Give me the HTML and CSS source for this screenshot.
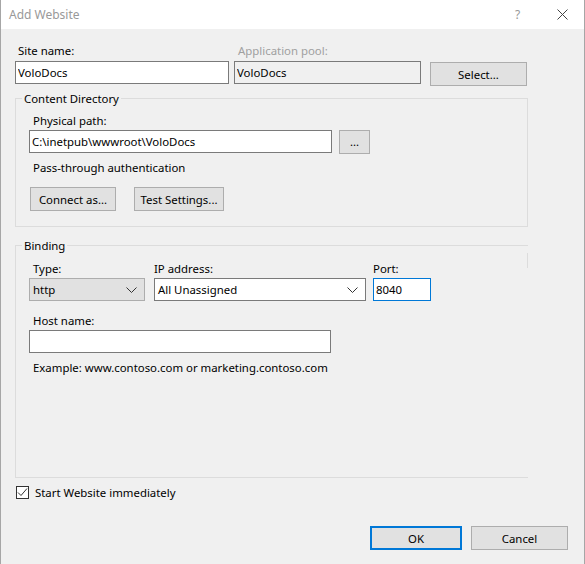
FILE: index.html
```html
<!DOCTYPE html>
<html lang="en">
<head>
    <meta charset="UTF-8">
    <meta name="viewport" content="width=device-width, initial-scale=1.0">
    <title>Add Website</title>
    <link rel="stylesheet" href="styles.css">
</head>
<body>

<div class="window">
    <!-- Title bar -->
    <div class="titlebar">
        <span class="title">Add Website</span>
        <span class="help">?</span>
        <span class="close">
            <svg width="11" height="11" viewBox="0 0 11 11">
                <path d="M0.5 0.5 L10.5 10.5 M10.5 0.5 L0.5 10.5" stroke="#444" stroke-width="1" fill="none"/>
            </svg>
        </span>
    </div>

    <div class="content">
        <!-- Site name / app pool -->
        <div class="top-row">
            <div class="field site-field">
                <label class="label">Site name:</label>
                <input class="textbox" type="text" value="VoloDocs">
            </div>
            <div class="field pool-field">
                <label class="label disabled">Application pool:</label>
                <input class="textbox readonly" type="text" value="VoloDocs" readonly>
            </div>
            <button class="btn select-btn">Select...</button>
        </div>

        <!-- Content Directory -->
        <fieldset class="group content-dir">
            <legend>Content Directory</legend>
            <div class="group-body">
                <label class="label">Physical path:</label>
                <div class="path-row">
                    <input class="textbox path-box" type="text" value="C:\inetpub\wwwroot\VoloDocs">
                    <button class="btn browse-btn">...</button>
                </div>
                <div class="note">Pass-through authentication</div>
                <div class="btn-row">
                    <button class="btn connect-btn">Connect as...</button>
                    <button class="btn test-btn">Test Settings...</button>
                </div>
            </div>
        </fieldset>

        <!-- Binding -->
        <fieldset class="group binding">
            <legend>Binding</legend>
            <div class="group-body">
                <div class="binding-row">
                    <div class="field type-field">
                        <label class="label">Type:</label>
                        <div class="combo combo-gray">
                            <span>http</span>
                            <svg width="11" height="6" viewBox="0 0 11 6">
                                <path d="M0.5 0.5 L5.5 5.5 L10.5 0.5" stroke="#333" stroke-width="1" fill="none"/>
                            </svg>
                        </div>
                    </div>
                    <div class="field ip-field">
                        <label class="label">IP address:</label>
                        <div class="combo">
                            <span>All Unassigned</span>
                            <svg width="11" height="6" viewBox="0 0 11 6">
                                <path d="M0.5 0.5 L5.5 5.5 L10.5 0.5" stroke="#333" stroke-width="1" fill="none"/>
                            </svg>
                        </div>
                    </div>
                    <div class="field port-field">
                        <label class="label">Port:</label>
                        <input class="textbox focused" type="text" value="8040">
                    </div>
                </div>
                <div class="field host-field">
                    <label class="label">Host name:</label>
                    <input class="textbox host-box" type="text" value="">
                </div>
                <div class="note example">Example: www.contoso.com or marketing.contoso.com</div>
            </div>
        </fieldset>

        <!-- Start checkbox -->
        <div class="check-row">
            <span class="checkbox">
                <svg width="11" height="11" viewBox="0 0 11 11">
                    <path d="M1 5.5 L4 8.5 L10 1.5" stroke="#333" stroke-width="1" fill="none"/>
                </svg>
            </span>
            <span>Start Website immediately</span>
        </div>

        <div class="footer">
            <button class="btn ok-btn">OK</button>
            <button class="btn cancel-btn">Cancel</button>
        </div>
    </div>
</div>

</body>
</html>
```

FILE: styles.css
```css
body {
    margin: 0;
    font-family: "Noto Sans", Arial, sans-serif;
    font-size: 11.4px;
    line-height: 15px;
    color: #000;
    background-color: #f0f0f0;
}

.window {
    width: 585px;
    height: 564px;
    box-sizing: border-box;
    border-left: 1px solid #a6a6a6;
    border-right: 1px solid #a6a6a6;
    background-color: #f0f0f0;
}

.titlebar {
    height: 29px;
    background-color: #fff;
    display: flex;
    align-items: center;
    padding-left: 8px;
}

.title {
    color: #999;
    flex: 1;
    font-size: 12px;
}

.help {
    color: #999;
    font-size: 12px;
    width: 10px;
    margin-right: 32px;
}

.close {
    display: flex;
    margin-right: 16px;
}

.content {
    padding: 14px 0 0 14px;
}

.label {
    display: block;
    padding-left: 3px;
}

.label.disabled {
    color: #a0a0a0;
}

.textbox {
    display: block;
    box-sizing: border-box;
    height: 23px;
    padding: 0 2px;
    margin: 3px 0 0 0;
    border: 1px solid #7a7a7a;
    background-color: #fff;
    font: inherit;
    color: #000;
    outline: none;
}

.textbox.readonly {
    background-color: #f0f0f0;
}

.textbox.focused {
    border-color: #0078d7;
}

.btn {
    box-sizing: border-box;
    height: 24px;
    padding: 0;
    border: 1px solid #adadad;
    background-color: #e1e1e1;
    font: inherit;
    color: #000;
}

.top-row {
    display: flex;
    align-items: flex-end;
}

.site-field .textbox {
    width: 214px;
}

.pool-field {
    margin-left: 5px;
}

.pool-field .label {
    padding-left: 4px;
}

.pool-field .textbox {
    width: 187px;
}

.select-btn {
    width: 97px;
    margin-left: 9px;
    margin-bottom: -2px;
}

.group {
    position: relative;
    margin: 0;
    padding: 0;
    width: 513px;
    box-sizing: border-box;
    border: 1px solid #dcdcdc;
    min-inline-size: 0;
}

.group legend {
    margin-left: 6px;
    padding: 0 2px;
    line-height: 15px;
}

.content-dir {
    margin-top: 7px;
    height: 136px;
}

.group-body {
    padding: 7px 0 0 13px;
}

.group-body .label {
    padding-left: 4px;
}

.path-row {
    display: flex;
    align-items: flex-start;
    margin-top: 2px;
}

.path-row .textbox {
    margin-top: 0;
}

.path-box {
    width: 303px;
}

.browse-btn {
    width: 31px;
    margin-left: 7px;
    line-height: 18px;
}

.note {
    padding-left: 4px;
    margin-top: 6px;
}

.btn-row {
    display: flex;
    margin-top: 12px;
    padding-left: 1px;
}

.connect-btn {
    width: 86px;
}

.test-btn {
    width: 90px;
    margin-left: 18px;
}

.binding {
    margin-top: 11px;
    height: 240px;
    border-right: none;
}

/* the right edge only shows near the top */
.binding::after {
    content: "";
    position: absolute;
    top: 0;
    right: 0;
    width: 1px;
    height: 15px;
    background-color: #dcdcdc;
}

.binding .group-body {
    padding-top: 8px;
}

.binding-row {
    display: flex;
}

.combo {
    box-sizing: border-box;
    height: 23px;
    margin-top: 2px;
    border: 1px solid #7a7a7a;
    background-color: #fff;
    display: flex;
    align-items: center;
    justify-content: space-between;
    padding: 0 7px 0 3px;
}

.combo-gray {
    border-color: #adadad;
    background-color: #e1e1e1;
}

.type-field .combo {
    width: 116px;
}

.ip-field {
    margin-left: 9px;
}

.ip-field .label {
    padding-left: 0;
}

.ip-field .combo {
    width: 212px;
}

.port-field {
    margin-left: 7px;
}

.port-field .label {
    padding-left: 0;
}

.port-field .textbox {
    width: 58px;
    margin-top: 2px;
}

.host-field {
    margin-top: 12px;
}

.host-box {
    width: 302px;
    margin-top: 2px;
}

.example {
    margin-top: 7px;
}

.check-row {
    display: flex;
    align-items: center;
    margin-top: 7px;
    padding-left: 1px;
}

.checkbox {
    box-sizing: border-box;
    width: 13px;
    height: 13px;
    border: 1px solid #333;
    background-color: #fff;
    display: flex;
    align-items: center;
    justify-content: center;
    margin-right: 6px;
}

.footer {
    display: flex;
    justify-content: flex-end;
    margin-top: 26px;
    padding-right: 16px;
}

.ok-btn {
    width: 92px;
    border: 2px solid #0078d7;
}

.cancel-btn {
    width: 97px;
    margin-left: 9px;
}
```
